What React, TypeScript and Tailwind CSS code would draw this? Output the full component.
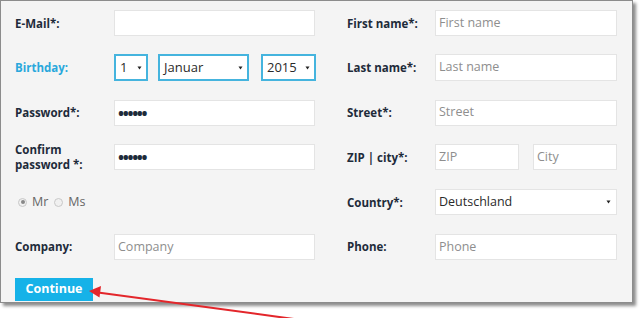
import React from "react";

const labelCls = "text-[11.5px] font-bold text-[#1e2b3a] leading-[15px]";
const boxCls = "h-[26px] bg-white border border-[#e4e4e4] flex items-center pl-[3px] text-[12.5px]";
const inputCls = `${boxCls} text-[#8e8e8e]`;

function Arrow({ r }: { r: string }) {
  return (
    <svg width="5" height="4" viewBox="0 0 5 4" className={`absolute ${r} top-1/2 -translate-y-1/2`}>
      <path d="M0.5 0.5 L4.5 0.5 L2.5 3.5 Z" fill="#222" />
    </svg>
  );
}

function Sel({ text, w }: { text: string; w: string }) {
  return (
    <div className={`relative h-[27px] bg-white border-2 border-[#45b4de] flex items-center pl-[4px] text-[13px] text-[#2a2a2a] ${w}`}>
      {text}
      <Arrow r="right-[4px]" />
    </div>
  );
}

function Radio({ checked }: { checked?: boolean }) {
  return (
    <span className="w-[9px] h-[9px] rounded-full border border-[#c8c8c8] bg-[#f0f0f0] flex items-center justify-center">
      {checked && <span className="w-[4px] h-[4px] rounded-full bg-[#888]" />}
    </span>
  );
}

function Pw() {
  return (
    <div className={`${boxCls} w-[201px] text-[#1e2b3a] pl-[2px]`}>
      <span className="text-[16px] font-bold tracking-[-1.3px] leading-none">••••••</span>
    </div>
  );
}

export default function App() {
  return (
    <div className="relative w-[640px] h-[318px] bg-white overflow-hidden" style={{ fontFamily: '"Open Sans", "Noto Sans", sans-serif' }}>
      <div className="w-[633px] h-[303px] bg-[#f4f4f4] border border-[#8c8c8c] shadow-[3px_3px_3px_rgba(0,0,0,0.45)] pl-[14px] pt-[9px]">
        <div className="flex gap-[31px]">
          {/* left column */}
          <div className="flex flex-col gap-[18.8px] w-[301px]">
            <div className="flex items-center h-[26px]">
              <div className={`${labelCls} w-[99px]`}>E-Mail*:</div>
              <div className={`${inputCls} w-[201px]`}></div>
            </div>
            <div className="flex items-center h-[26px]">
              <div className="text-[11.5px] font-bold text-[#2aa8dc] w-[99px]">Birthday:</div>
              <div className="flex items-center">
                <Sel text="1" w="w-[34px]" />
                <div className="w-[10px]" />
                <Sel text="Januar" w="w-[91px]" />
                <div className="w-[12px]" />
                <Sel text="2015" w="w-[55px]" />
              </div>
            </div>
            <div className="flex items-center h-[26px]">
              <div className={`${labelCls} w-[99px]`}>Password*:</div>
              <Pw />
            </div>
            <div className="flex items-center h-[26px]">
              <div className={`${labelCls} w-[99px]`}>Confirm<br />password *:</div>
              <Pw />
            </div>
            <div className="flex items-center h-[26px] pl-[3px] text-[12.5px] text-[#666]">
              <Radio checked />
              <span className="ml-[5px]">Mr</span>
              <span className="ml-[6px]"><Radio /></span>
              <span className="ml-[5px]">Ms</span>
            </div>
            <div className="flex items-center h-[26px]">
              <div className={`${labelCls} w-[99px]`}>Company:</div>
              <div className={`${inputCls} w-[201px]`}>Company</div>
            </div>
            <div className="mt-[-1px]">
              <button className="h-[23px] w-[78px] bg-[#16b2e8] text-white text-[12.5px] font-bold flex items-center justify-center">Continue</button>
            </div>
          </div>
          {/* right column */}
          <div className="flex flex-col gap-[18.8px] w-[270px]">
            <div className="flex items-center h-[26px]">
              <div className={`${labelCls} w-[88px]`}>First name*:</div>
              <div className={`${inputCls} w-[182px]`}>First name</div>
            </div>
            <div className="flex items-center h-[26px]">
              <div className={`${labelCls} w-[88px]`}>Last name*:</div>
              <div className={`${inputCls} w-[182px] h-[27px]`}>Last name</div>
            </div>
            <div className="flex items-center h-[26px]">
              <div className={`${labelCls} w-[88px]`}>Street*:</div>
              <div className={`${inputCls} w-[182px]`}>Street</div>
            </div>
            <div className="flex items-center h-[26px]">
              <div className={`${labelCls} w-[88px]`}>ZIP | city*:</div>
              <div className={`${inputCls} w-[84px]`}>ZIP</div>
              <div className="w-[14px]" />
              <div className={`${inputCls} w-[84px]`}>City</div>
            </div>
            <div className="flex items-center h-[26px]">
              <div className={`${labelCls} w-[88px]`}>Country*:</div>
              <div className={`${boxCls} relative w-[182px] text-[#2a2a2a]`}>
                Deutschland
                <Arrow r="right-[5px]" />
              </div>
            </div>
            <div className="flex items-center h-[26px]">
              <div className={`${labelCls} w-[88px]`}>Phone:</div>
              <div className={`${inputCls} w-[182px]`}>Phone</div>
            </div>
          </div>
        </div>
      </div>
      <svg className="absolute left-0 top-0 pointer-events-none" width="640" height="318" viewBox="0 0 640 318">
        <line x1="294" y1="319" x2="98" y2="292.5" stroke="#e3262b" strokeWidth="2" />
        <path d="M89 291 L101 286 L99.5 297.5 Z" fill="#e3262b" />
      </svg>
    </div>
  );
}
